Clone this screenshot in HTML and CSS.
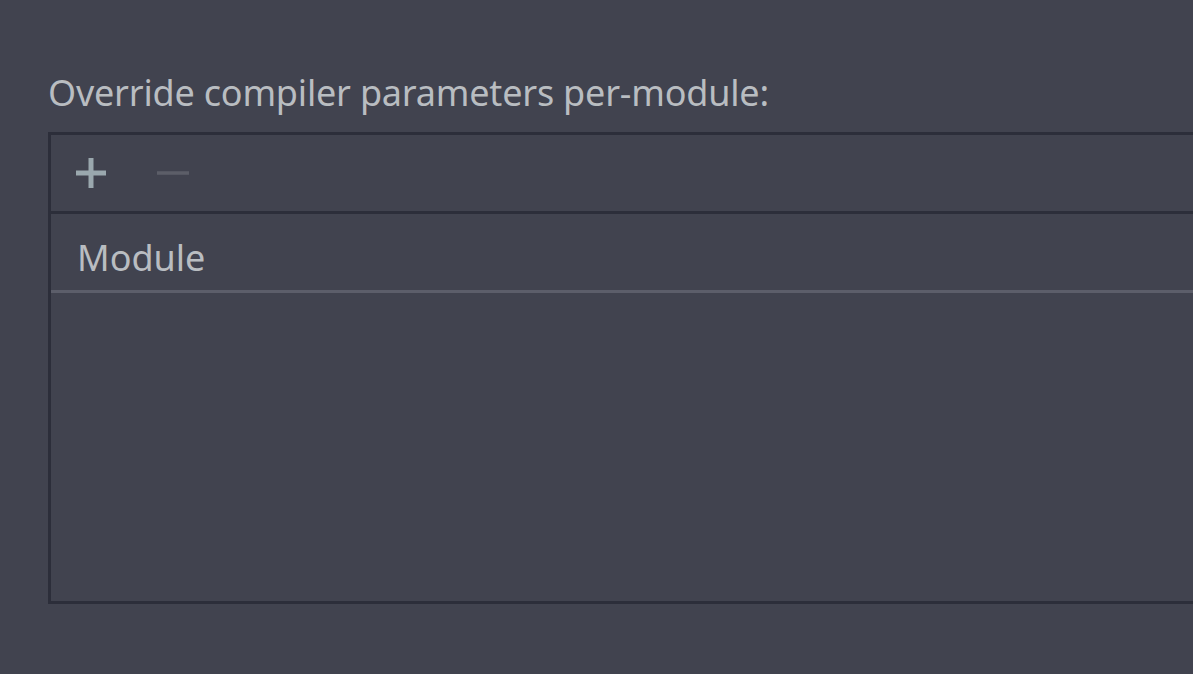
FILE: index.html
```html
<!DOCTYPE html>
<html>
<head>
<meta charset="utf-8">
<link rel="stylesheet" href="styles.css">
</head>
<body>
<div class="page">
  <div class="label">Override compiler parameters per-module:</div>
  <div class="table">
    <div class="toolbar">
      <span class="tool">
        <svg width="32" height="32" viewBox="0 0 32 32"><path d="M16 1V31M1 16H31" stroke="#9aa8ae" stroke-width="5"/></svg>
      </span>
      <span class="tool">
        <svg width="32" height="32" viewBox="0 0 32 32"><path d="M0 16H32" stroke="#5c5e68" stroke-width="3.5"/></svg>
      </span>
    </div>
    <div class="header">Module</div>
    <div class="body"></div>
  </div>
</div>
</body>
</html>
```

FILE: styles.css
```css
html, body {
  margin: 0;
  padding: 0;
  background: #41434f;
  width: 1193px;
  height: 674px;
  overflow: hidden;
}
.page {
  padding: 68px 0 0 48px;
  font-family: "Noto Sans", "Open Sans", sans-serif;
  color: #b9bdc1;
}
.label {
  font-size: 36px;
  line-height: 50px;
  height: 50px;
  margin-bottom: 14px;
  letter-spacing: -0.2px;
}
.table {
  border: 3px solid #2c2e3a;
  border-right: none;
  margin-right: -10px;
  background: #41434f;
}
.toolbar {
  height: 76px;
  border-bottom: 3px solid #2c2e3a;
  display: flex;
  align-items: center;
  padding-left: 24px;
  gap: 50px;
}
.tool {
  display: flex;
  width: 32px;
  height: 32px;
}
.header {
  box-sizing: border-box;
  height: 79px;
  padding-top: 12px;
  line-height: 64px;
  font-size: 36px;
  padding-left: 26px;
  border-bottom: 3px solid #5c5e6a;
}
.body {
  height: 308px;
}
```
